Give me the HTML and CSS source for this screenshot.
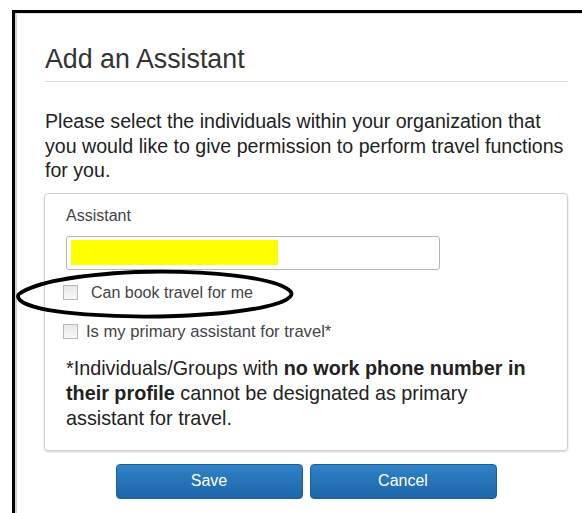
FILE: index.html
```html
<!DOCTYPE html>
<html lang="en">
<head>
<meta charset="utf-8">
<title>Add an Assistant</title>
<link rel="stylesheet" href="styles.css">
</head>
<body>
<div class="frame">
  <div class="panel">
    <h1 class="title">Add an Assistant</h1>
    <p class="intro">Please select the individuals within your organization that you would like to give permission to perform travel functions for you.</p>
    <div class="fieldset">
      <div class="label">Assistant</div>
      <div class="input"><span class="highlight"></span></div>
      <label class="check check-first"><span class="box"></span><span class="check-text">Can book travel for me</span></label>
      <label class="check check-second"><span class="box"></span><span class="check-text">Is my primary assistant for travel*</span></label>
      <p class="note">*Individuals/Groups with <b>no work phone number in their profile</b> cannot be designated as primary assistant for travel.</p>
    </div>
    <div class="actions">
      <button class="btn" type="button">Save</button>
      <button class="btn" type="button">Cancel</button>
    </div>
  </div>
</div>
<!-- hand-drawn marker ring around the first option -->
<svg class="marker" width="280" height="56" viewBox="0 0 280 56">
  <path d="M3 27 C 20 15, 60 8, 120 5 C 190 3, 262 10, 275 25 C 280 35, 240 46, 160 49 C 100 51, 30 47, 8 36 C 2 33, 1 29, 3 27 Z" fill="none" stroke="#000" stroke-width="3.8" stroke-linejoin="round"/>
</svg>
</body>
</html>
```

FILE: styles.css
```css
html, body {
  margin: 0;
  padding: 0;
  background: #fff;
}

body {
  font-family: "Liberation Sans", Arial, sans-serif;
  color: #222;
  position: relative;
  height: 513px;
  overflow: hidden;
}

.frame {
  margin: 10px 0 0 12px;
  border-top: 3px solid #000;
  border-left: 3px solid #000;
  height: 500px;
}

.panel {
  border-top: 1px solid #e2e2e4;
  border-left: 2px solid #d6cfd0;
  height: 100%;
  padding: 0 14px 0 27px;
}

.title {
  margin: 30px 0 0 1px;
  padding-bottom: 7px;
  border-bottom: 1px solid #dcdcdc;
  font-size: 26.8px;
  font-weight: normal;
  line-height: 30px;
  color: #333;
}

.intro {
  margin: 27px 0 0 1px;
  font-size: 19.6px;
  line-height: 24.5px;
  color: #222;
}

.fieldset {
  margin-top: 10px;
  border: 1px solid #cfcfcf;
  border-radius: 4px;
  box-shadow: 0 1px 2px rgba(0, 0, 0, 0.18);
  padding: 12px 20px 19px 21px;
}

.label {
  font-size: 16px;
  line-height: 19px;
  color: #444;
}

.input {
  margin-top: 11px;
  width: 374px;
  height: 34px;
  box-sizing: border-box;
  border: 1px solid #b4b4b4;
  border-radius: 3px;
  padding: 3px 0 0 4px;
}

.highlight {
  display: block;
  width: 207px;
  height: 25px;
  background: #ffff00;
}

.check {
  display: flex;
  align-items: center;
  margin-left: -3px;
  font-size: 16px;
  line-height: 19px;
  color: #444;
}

.check-first {
  margin-top: 13px;
}

.check-second {
  margin-top: 20px;
  font-size: 16.6px;
}

.box {
  width: 13px;
  height: 13px;
  border: 1px solid #b8b8b8;
  background: linear-gradient(#e8e8e8, #f8f8f8);
  flex: none;
}

.check-first .check-text {
  margin-left: 13px;
}

.check-second .check-text {
  margin-left: 8px;
}

.note {
  margin: 15px 0 0;
  font-size: 19.8px;
  line-height: 25px;
  color: #222;
}

.note b {
  font-weight: bold;
}

.actions {
  display: flex;
  justify-content: center;
  gap: 7px;
  margin-top: 13px;
}

.btn {
  width: 187px;
  height: 35px;
  border: 1px solid #1b5e9e;
  border-radius: 4px;
  background: linear-gradient(#3182c6, #1c66a9);
  color: #fff;
  font-family: "Liberation Sans", Arial, sans-serif;
  font-size: 16px;
  padding: 0;
}

.marker {
  position: absolute;
  left: 16px;
  top: 267px;
}
```
